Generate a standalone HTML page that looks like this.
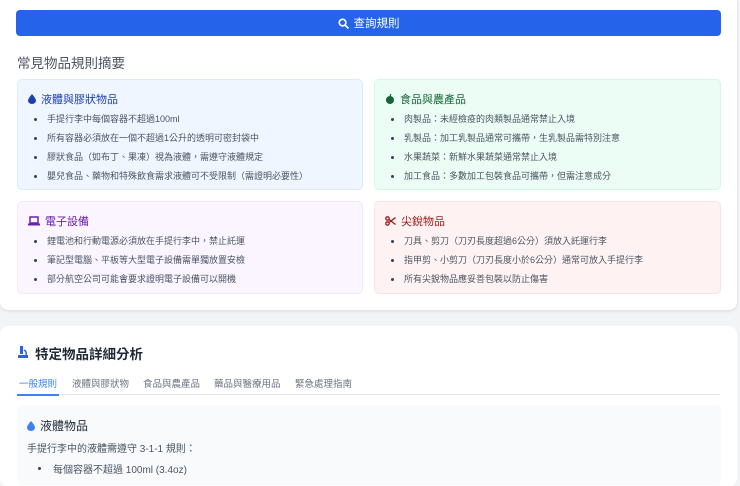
<!DOCTYPE html>
<html><head><meta charset="utf-8"><style>
*{box-sizing:border-box;margin:0;padding:0}
body{width:740px;height:478px;overflow:hidden;background:#f3f4f6;font-family:"Liberation Sans","Noto Sans CJK TC",sans-serif;color:#374151;position:relative;-webkit-font-smoothing:antialiased}
.card1{position:absolute;left:0;top:0;width:737px;height:310px;background:#fff;border-radius:0 0 8px 8px;box-shadow:0 1px 3px rgba(0,0,0,.12)}
.btn{position:absolute;left:16px;top:10px;width:705px;height:26px;background:#2563eb;border-radius:4px;color:#fff;font-size:11.5px;display:flex;align-items:center;justify-content:center;gap:5px}
h2{position:absolute;left:17px;top:52px;font-size:13.5px;font-weight:normal;color:#4b5563}
.box{position:absolute;border-radius:5px;border:1px solid;padding:11px 0 0 10px}
.box h3{font-size:11px;font-weight:normal;display:flex;align-items:center;gap:5px;height:16px;margin-bottom:3px}
.box ul{list-style:none;margin-left:6px}
.box li{font-size:9px;color:#4b5563;height:19px;line-height:19px;position:relative;padding-left:13px}
.box li:before{content:"";position:absolute;left:0;top:8px;width:3px;height:3px;border-radius:50%;background:#374151}
.b1{left:17px;top:79px;width:346px;height:111px;background:#eff6ff;border-color:#dbeafe}
.b1 h3{color:#1e40af}
.b2{left:374px;top:79px;width:347px;height:111px;background:#ecfdf5;border-color:#d1fae5}
.b2 h3{color:#166534}
.b3{left:17px;top:201px;width:346px;height:93px;background:#faf5ff;border-color:#f3e8ff}
.b3 h3{color:#6b21a8}
.b4{left:374px;top:201px;width:347px;height:93px;background:#fef2f2;border-color:#fee2e2}
.b4 h3{color:#991b1b}
.card2{position:absolute;left:0;top:326px;width:737px;height:160px;background:#fff;border-radius:8px}
.t2{position:absolute;left:17px;top:343px;font-size:13.5px;font-weight:600;color:#1f2937;display:flex;align-items:center;gap:6px}
.tabs{position:absolute;left:17px;top:374px;width:703px;height:21px;border-bottom:1px solid #e5e7eb;font-size:9.5px;color:#6b7280}
.tabs span{position:absolute;top:2px}
.tabs .a{color:#3b82f6;border-bottom:2px solid #3b82f6;height:20px;left:0;padding:0 2px}
.inner{position:absolute;left:17px;top:405px;width:704px;height:80px;background:#f8fafc;border-radius:5px}
.inner h4{position:absolute;left:10px;top:12px;font-size:12px;font-weight:normal;color:#1f2937;display:flex;align-items:center;gap:5px}
.inner p{position:absolute;left:10px;top:35px;font-size:10px;color:#4b5563}
.inner li{position:absolute;left:36px;top:56px;font-size:10px;color:#4b5563;list-style:none}
.inner li:before{content:"";position:absolute;left:-15px;top:6px;width:3px;height:3px;border-radius:50%;background:#374151}
</style></head><body>
<div class="card1">
<div class="btn"><svg width="11" height="11" viewBox="0 0 12 12"><circle cx="5" cy="5" r="3.6" fill="none" stroke="#fff" stroke-width="1.8"/><path d="M7.6 7.6L10.8 10.8" stroke="#fff" stroke-width="2" stroke-linecap="round"/></svg>查詢規則</div>
<h2>常見物品規則摘要</h2>
<div class="box b1"><h3><svg width="8" height="10" viewBox="0 0 8 10"><path d="M4 0C4 0 0 4.5 0 6.5A4 3.5 0 0 0 8 6.5C8 4.5 4 0 4 0Z" fill="#1e40af"/></svg>液體與膠狀物品</h3>
<ul><li>手提行李中每個容器不超過100ml</li><li>所有容器必須放在一個不超過1公升的透明可密封袋中</li><li>膠狀食品（如布丁、果凍）視為液體，需遵守液體規定</li><li>嬰兒食品、藥物和特殊飲食需求液體可不受限制（需證明必要性）</li></ul></div>
<div class="box b2"><h3><svg width="10" height="10" viewBox="0 0 10 10"><circle cx="5" cy="6" r="4" fill="#166534"/><path d="M5 2L6 0" stroke="#166534" stroke-width="1.2"/></svg>食品與農產品</h3>
<ul><li>肉製品：未經檢疫的肉類製品通常禁止入境</li><li>乳製品：加工乳製品通常可攜帶，生乳製品需特別注意</li><li>水果蔬菜：新鮮水果蔬菜通常禁止入境</li><li>加工食品：多數加工包裝食品可攜帶，但需注意成分</li></ul></div>
<div class="box b3"><h3><svg width="12" height="10" viewBox="0 0 12 10"><rect x="2" y="1" width="8" height="6" fill="none" stroke="#6b21a8" stroke-width="1.5"/><rect x="0" y="7.5" width="12" height="2" fill="#6b21a8"/></svg>電子設備</h3>
<ul><li>鋰電池和行動電源必須放在手提行李中，禁止託運</li><li>筆記型電腦、平板等大型電子設備需單獨放置安檢</li><li>部分航空公司可能會要求證明電子設備可以開機</li></ul></div>
<div class="box b4"><h3><svg width="11" height="10" viewBox="0 0 11 10"><circle cx="2.5" cy="2.5" r="1.7" fill="none" stroke="#991b1b" stroke-width="1.3"/><circle cx="2.5" cy="7.5" r="1.7" fill="none" stroke="#991b1b" stroke-width="1.3"/><path d="M4 3.5L10.5 8.5M4 6.5L10.5 1.5" stroke="#991b1b" stroke-width="1.4"/></svg>尖銳物品</h3>
<ul><li>刀具、剪刀（刀刃長度超過6公分）須放入託運行李</li><li>指甲剪、小剪刀（刀刃長度小於6公分）通常可放入手提行李</li><li>所有尖銳物品應妥善包裝以防止傷害</li></ul></div>
</div>
<div class="card2"></div>
<div class="t2"><svg width="12" height="14" viewBox="0 0 12 14"><rect x="3" y="0" width="3" height="8" fill="#2563eb"/><path d="M1 9H11V12H1Z" fill="#2563eb"/><path d="M7 4A4 4 0 0 1 9 9" fill="none" stroke="#2563eb" stroke-width="1.5"/></svg>特定物品詳細分析</div>
<div class="tabs"><span class="a">一般規則</span><span style="left:55px">液體與膠狀物</span><span style="left:126px">食品與農產品</span><span style="left:197px">藥品與醫療用品</span><span style="left:278px">緊急處理指南</span></div>
<div class="inner"><h4><svg width="8" height="10" viewBox="0 0 8 10"><path d="M4 0C4 0 0 4.5 0 6.5A4 3.5 0 0 0 8 6.5C8 4.5 4 0 4 0Z" fill="#3b82f6"/></svg>液體物品</h4><p>手提行李中的液體需遵守 3-1-1 規則：</p><li>每個容器不超過 100ml (3.4oz)</li></div>
</body></html>
